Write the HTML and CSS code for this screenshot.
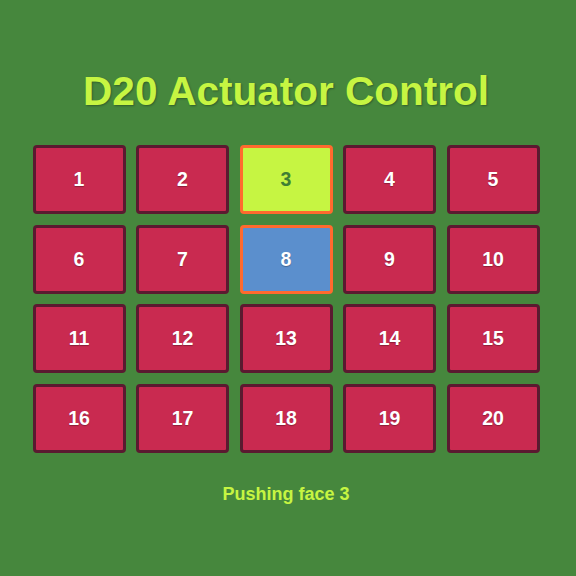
FILE: index.html
```html
<!DOCTYPE html>
<html>
<head>
<meta charset="utf-8">
<link rel="stylesheet" href="styles.css">
</head>
<body>
<div class="app">
  <h1 class="title">D20 Actuator Control</h1>
  <div class="grid">
    <div class="face">1</div>
    <div class="face">2</div>
    <div class="face face-active">3</div>
    <div class="face">4</div>
    <div class="face">5</div>
    <div class="face">6</div>
    <div class="face">7</div>
    <div class="face face-selected">8</div>
    <div class="face">9</div>
    <div class="face">10</div>
    <div class="face">11</div>
    <div class="face">12</div>
    <div class="face">13</div>
    <div class="face">14</div>
    <div class="face">15</div>
    <div class="face">16</div>
    <div class="face">17</div>
    <div class="face">18</div>
    <div class="face">19</div>
    <div class="face">20</div>
  </div>
  <div class="status">Pushing face 3</div>
</div>
</body>
</html>
```
FILE: styles.css
```css
html, body {
  margin: 0;
  padding: 0;
  width: 576px;
  height: 576px;
  background: #46873d;
  font-family: "Liberation Sans", Arial, sans-serif;
  overflow: hidden;
}
.app {
  display: flex;
  flex-direction: column;
  align-items: center;
  padding-top: 68px;
  padding-right: 4px;
}
.title {
  margin: 0;
  font-size: 40.5px;
  line-height: 46px;
  font-weight: bold;
  color: #c6f542;
  text-shadow: 1px 1px 2px rgba(0,0,0,0.3);
}
.grid {
  margin-top: 31px;
  display: grid;
  grid-template-columns: repeat(5, 93px);
  grid-auto-rows: 69px;
  column-gap: 10.5px;
  row-gap: 10.5px;
}
.face {
  box-sizing: border-box;
  background: #c92a50;
  border: 3px solid #5a1a30;
  border-radius: 4px;
  display: flex;
  align-items: center;
  justify-content: center;
  color: #ffffff;
  font-weight: bold;
  font-size: 19.5px;
  text-shadow: 0 1px 1px rgba(0,0,0,0.3);
}
.face-active {
  background: #c6f542;
  border-color: #ff6a2e;
  color: #3e7f34;
  text-shadow: none;
}
.face-selected {
  background: #5b8fcd;
  border-color: #ff6a2e;
}
.status {
  margin-top: 31px;
  font-size: 18px;
  font-weight: bold;
  color: #c6f542;
}
```
